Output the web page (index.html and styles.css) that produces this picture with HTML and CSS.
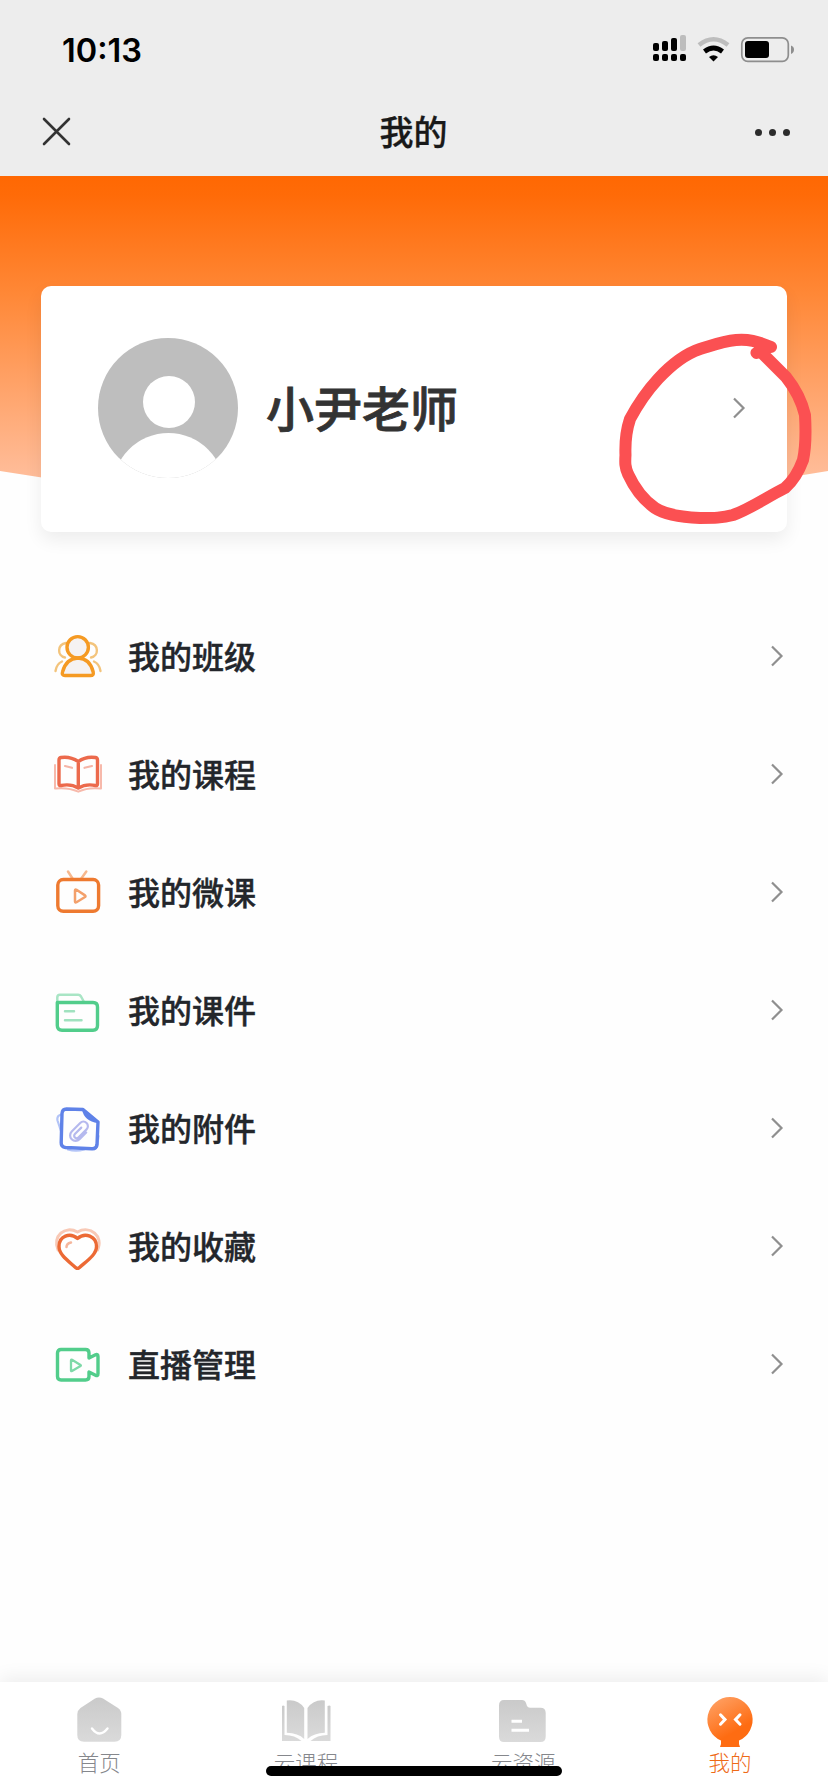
FILE: index.html
```html
<!DOCTYPE html>
<html lang="zh-CN">
<head>
    <meta charset="UTF-8">
    <meta name="viewport" content="width=device-width, initial-scale=1.0">
    <title>我的</title>
    <link rel="stylesheet" href="styles.css">
</head>
<body>

    <header class="top">
        <div class="status-bar">
            <span class="time">10:13</span>
            <svg class="status-icons" width="144" height="30" viewBox="652 34 144 30">
                <g fill="#000">
                    <rect x="653" y="43" width="6" height="8" rx="2"/>
                    <rect x="662" y="41" width="6" height="10" rx="2"/>
                    <rect x="671" y="38" width="6" height="13" rx="2"/>
                    <rect x="680" y="35" width="6" height="16" rx="2" fill="#bdbdbd"/>
                    <rect x="653" y="54" width="6" height="7" rx="2"/>
                    <rect x="662" y="54" width="6" height="7" rx="2"/>
                    <rect x="671" y="54" width="6" height="7" rx="2"/>
                    <rect x="680" y="54" width="6" height="7" rx="2"/>
                </g>
                <path d="M699 45Q713.500 33.500 728 45" fill="none" stroke="#bdbdbd" stroke-width="4.500"/>
                <path d="M704.500 51.500Q713.500 44.500 722.500 51.500" fill="none" stroke="#000" stroke-width="4.800"/>
                <path d="M709 57Q713.500 53.500 718 57L713.500 61.500Z" fill="#000"/>
                <rect x="741.800" y="37.800" width="46.500" height="23.500" rx="6" fill="none" stroke="#8e8e8e" stroke-width="1.700"/>
                <rect x="745" y="41" width="24" height="17" rx="3" fill="#000"/>
                <path d="M791 45.500Q794 46.500 794 49.500T791 54Z" fill="#8e8e8e"/>
            </svg>
        </div>
        <div class="nav-bar">
            <svg class="close" width="30" height="30" viewBox="0 0 30 30">
                <path d="M2 2L27 27M27 2L2 27"/>
            </svg>
            <h1>我的</h1>
            <div class="more"><i></i><i></i><i></i></div>
        </div>
    </header>

    <section class="hero">
        <svg class="hero-bg" width="828" height="330" viewBox="0 0 828 330">
            <defs>
                <linearGradient id="heroFill" x1="0" y1="0" x2="0" y2="1">
                    <stop offset="0" stop-color="#ff6803"/>
                    <stop offset="0.060" stop-color="#ff6b08"/>
                    <stop offset="0.360" stop-color="#ff8837"/>
                    <stop offset="0.900" stop-color="#ffbc98"/>
                    <stop offset="1" stop-color="#ffc6a8"/>
                </linearGradient>
            </defs>
            <path d="M0 0H828V295Q414 365 0 295Z" fill="url(#heroFill)"/>
        </svg>
        <div class="profile-card">
            <svg class="avatar" width="140" height="140" viewBox="0 0 140 140">
                <defs>
                    <clipPath id="round"><circle cx="70" cy="70" r="70"/></clipPath>
                </defs>
                <g clip-path="url(#round)">
                    <rect width="140" height="140" fill="#bebebe"/>
                    <circle cx="71" cy="64" r="26" fill="#fff"/>
                    <circle cx="70.500" cy="151" r="56" fill="#fff"/>
                </g>
            </svg>
            <h2>小尹老师</h2>
            <svg class="arrow" width="14" height="22" viewBox="0 0 14 22">
                <path d="M2 1.500L11.500 11L2 20.500"/>
            </svg>
        </div>
        <!-- hand drawn mark around the arrow -->
        <svg class="mark" width="200" height="200" viewBox="616 330 200 200">
            <path d="M771 347C757 341 748 339 736 340C723 341 713 345 700 349C685 354 671 365 658 379C647 391 638 404 630 419C626 431 625 442 625.500 455C625 463 625 467 628 474C634 487 642 499 655 508C664 514 680 517 700 518C714 518 722 518 733 515C750 509 767 497 785 488C793 481 799 471 803 460C806 446 806 432 805 415C801 398 794 387 786 377C778 369 770 361 761 352L756.500 353L766 348"/>
        </svg>
    </section>

    <main class="menu">
        <a class="menu-item">
            <svg class="icon" viewBox="0 0 48 48" stroke="#f59a23">
                <g stroke="#f3c47c" stroke-width="2.400">
                    <path d="M12 11C3 12.500 3 24 11 25.500M36 11C45 12.500 45 24 37 25.500M1.500 39Q2.500 32 8 29.500M46.500 39Q45.500 32 40 29.500"/>
                </g>
                <circle cx="23.700" cy="15.300" r="10.700" fill="#f5f2f2"/>
                <path d="M11 43.500Q7.500 43.500 8.500 40Q12 26.500 24 26Q36 26.500 39.200 40Q40 43.500 36.500 43.500Z" fill="#f5f2f2"/>
            </svg>
            <span>我的班级</span>
            <svg class="arrow" width="14" height="22" viewBox="0 0 14 22"><path d="M2 1.500L11.500 11L2 20.500"/></svg>
        </a>
        <a class="menu-item">
            <svg class="icon" viewBox="0 0 48 48" stroke="#ec6a4c">
                <path d="M1 15V38.500Q14 37 24.300 41.700Q34 37 47 38.500V15" stroke="#f7b9ab" stroke-width="2"/>
                <path d="M24.300 11.500Q16 6 7 7.500Q5 8 5 10V34Q5 36 7 35.500Q17 33.500 24.300 38Q32 33.500 41.500 35.500Q43.500 36 43.500 34V10Q43.500 8 41.500 7.500Q32 6 24.300 11.500ZM24.300 11.500V38"/>
                <path d="M11 16L18 17.800M38 16L30.500 17.800" stroke="#f5b5a7" stroke-width="2.200"/>
            </svg>
            <span>我的课程</span>
            <svg class="arrow" width="14" height="22" viewBox="0 0 14 22"><path d="M2 1.500L11.500 11L2 20.500"/></svg>
        </a>
        <a class="menu-item">
            <svg class="icon" viewBox="0 0 48 48" stroke="#ee7a30">
                <path d="M14 3.500L18.500 10.500M32.300 3.500L27.300 10.500" stroke="#f7b88d" stroke-width="2.500"/>
                <rect x="3.800" y="11.500" width="40.800" height="31.800" rx="5.500"/>
                <path d="M21 22.500V33.500Q21 35 22.500 34.200L31 29Q32 28.200 31 27.400L22.500 21.800Q21 21 21 22.500Z" stroke="#f3a06b" stroke-width="2.500"/>
            </svg>
            <span>我的微课</span>
            <svg class="arrow" width="14" height="22" viewBox="0 0 14 22"><path d="M2 1.500L11.500 11L2 20.500"/></svg>
        </a>
        <a class="menu-item">
            <svg class="icon" viewBox="0 0 48 48" stroke="#52cd8b">
                <path d="M3.300 17V11.500Q3.300 8.800 6 8.800H24Q26 8.800 27 10.500L29.500 15" stroke="#a9e5c5" stroke-width="2.500"/>
                <path d="M3.300 16.500H39Q43.500 16.500 43.500 21V39.500Q43.500 44.200 39 44.200H8Q3.300 44.200 3.300 39.500Z"/>
                <path d="M11 25.300H20M11 34.200H27.500" stroke="#a0e2bf" stroke-width="2.500"/>
            </svg>
            <span>我的课件</span>
            <svg class="arrow" width="14" height="22" viewBox="0 0 14 22"><path d="M2 1.500L11.500 11L2 20.500"/></svg>
        </a>
        <a class="menu-item">
            <svg class="icon" viewBox="0 0 48 48" stroke="#5f82e8">
                <path d="M7.500 10.500Q2.500 11.500 3.500 16.500L7 27M14 45.500Q22 48 30 45.500M44.500 32L43 43" stroke="#b3c4f7" stroke-width="2.200"/>
                <path d="M12.500 5L29 5.500L44 18L43 40.500Q42.500 45 38 44.800L11.500 43.500Q7 43 7.200 38.500L8 9.500Q8.300 5 12.500 5Z"/>
                <path d="M29 5.500Q31 16 44 18Z" fill="#5f82e8" stroke-width="2"/>
                <path d="M5.500 -4V5.500A5.500 5.500 0 0 1 -5.500 5.500V-6.500A4.500 4.500 0 0 1 3.500 -6.500V5A2.300 2.300 0 0 1 -1.500 5V-4" transform="translate(25.500 27.500) rotate(45)" stroke="#b5b9ee" stroke-width="2.200"/>
            </svg>
            <span>我的附件</span>
            <svg class="arrow" width="14" height="22" viewBox="0 0 14 22"><path d="M2 1.500L11.500 11L2 20.500"/></svg>
        </a>
        <a class="menu-item">
            <svg class="icon" viewBox="0 0 48 48" stroke="#ec6a35">
                <path d="M4 28C-2 14 11 3 23.500 10C36 3 50 14 43.500 28" stroke="#f8c9b6" stroke-width="3"/>
                <path d="M23.500 16.500C16 10 5 14 5 24.500C5 33 15 39.500 21.500 45.500Q23.500 47.300 25.500 45.500C32 39.500 42.500 33 42.500 24.500C42.500 14 31 10 23.500 16.500Z" fill="#fff"/>
                <path d="M12.500 25Q12.500 21.500 17 20.500" stroke="#f5b69c" stroke-width="2.500"/>
            </svg>
            <span>我的收藏</span>
            <svg class="arrow" width="14" height="22" viewBox="0 0 14 22"><path d="M2 1.500L11.500 11L2 20.500"/></svg>
        </a>
        <a class="menu-item">
            <svg class="icon" viewBox="0 0 48 48" stroke="#52cd8b">
                <path d="M7 9.500H31.500Q35 9.500 35 13V18L41.500 14.800Q44 13.800 44 16.500V33.500Q44 36.500 41.500 35.300L35 32V36.500Q35 40 31.500 40H7Q3.500 40 3.500 36.500V13Q3.500 9.500 7 9.500Z"/>
                <path d="M17 20.500V30.500Q17 31.500 18 31L26.500 26Q27.300 25.500 26.500 25L18 19.800Q17 19.300 17 20.500Z" stroke="#7ed9a8" stroke-width="2.300"/>
            </svg>
            <span>直播管理</span>
            <svg class="arrow" width="14" height="22" viewBox="0 0 14 22"><path d="M2 1.500L11.500 11L2 20.500"/></svg>
        </a>
    </main>

    <nav class="tab-bar">
        <svg class="defs" width="0" height="0">
            <defs>
                <linearGradient id="grayFill" x1="0" y1="0" x2="0" y2="1">
                    <stop offset="0" stop-color="#cacaca"/>
                    <stop offset="1" stop-color="#dadada"/>
                </linearGradient>
                <linearGradient id="orangeFill" x1="0" y1="0" x2="0.500" y2="1">
                    <stop offset="0" stop-color="#ffa66c"/>
                    <stop offset="0.800" stop-color="#fe6c12"/>
                </linearGradient>
            </defs>
        </svg>
        <a class="tab">
            <svg width="50" height="50" viewBox="0 0 50 50">
                <path d="M21 3.500Q25 1.500 29 3.500L44 13Q47.300 15.500 47.300 19V40Q47.300 46.700 40.500 46.700H10Q3.300 46.700 3.300 40V19Q3.300 15.500 6.500 13Z" fill="url(#grayFill)"/>
                <path d="M18 33.500Q25.500 43.500 33.500 33.500" fill="none" stroke="#fff" stroke-width="2.400" stroke-linecap="round"/>
            </svg>
            <span>首页</span>
        </a>
        <a class="tab wide">
            <svg width="50" height="50" viewBox="0 0 50 50">
                <g fill="url(#grayFill)">
                    <path d="M5.800 5.500Q17 4 23.200 13V44Q17 38 5.800 37.800Z"/>
                    <path d="M43.800 5.500Q33 4 26.500 13V44Q33 38 43.800 37.800Z"/>
                    <path d="M1 11Q2 10 3.500 11V40Q14 40 20.500 46H1Z"/>
                    <path d="M49.500 11Q48.500 10 46.500 11V40Q36 40 29.500 46H49.500Z"/>
                </g>
            </svg>
            <span>云课程</span>
        </a>
        <a class="tab wide">
            <svg width="50" height="50" viewBox="0 0 50 50">
                <path d="M6 5H24Q27 5 28 8L29 11Q29.800 12.700 32 12.700H42.500Q47.700 12.700 47.700 18V41.500Q47.700 47 42.500 47H6Q1 47 1 41.500V10.500Q1 5 6 5Z" fill="url(#grayFill)"/>
                <path d="M13.500 26.300H24M13.500 35.300H31" stroke="#fff" stroke-width="3"/>
            </svg>
            <span>云资源</span>
        </a>
        <a class="tab active">
            <svg width="50" height="50" viewBox="0 0 50 50">
                <path d="M25 2A22.700 22.700 0 0 1 34 45.500Q33.500 49 35 52H15Q16.500 49 16 45.500A22.700 22.700 0 0 1 25 2Z" fill="url(#orangeFill)"/>
                <path d="M15.500 19.800L20 24.600L15.500 29.200M35 19.800L30.500 24.600L35 29.200" fill="none" stroke="#fff" stroke-width="3" stroke-linecap="round"/>
            </svg>
            <span>我的</span>
        </a>
        <div class="home-indicator"></div>
    </nav>

</body>
</html>
```

FILE: styles.css
```css
* {
    margin: 0;
    padding: 0;
    box-sizing: border-box;
}
body {
    display: flex;
    flex-direction: column;
    width: 828px;
    height: 1792px;
    background: #fefefe;
    font-family: "Noto Sans CJK SC", sans-serif;
    overflow: hidden;
}

/* header */
.top {
    height: 176px;
    background: #ededed;
}
.status-bar {
    display: flex;
    justify-content: space-between;
    align-items: center;
    height: 98px;
    padding: 0 32px 0 62px;
}
.time {
    padding-top: 3px;
    font-family: Inter, sans-serif;
    font-size: 32.5px;
    font-weight: 600;
    line-height: 40px;
    color: #000;
}
.nav-bar {
    display: flex;
    justify-content: space-between;
    align-items: center;
    height: 68px;
    padding: 0 38px 0 42px;
}
.close path {
    fill: none;
    stroke: #333;
    stroke-width: 2.6;
    stroke-linecap: round;
}
.nav-bar h1 {
    padding-bottom: 3px;
    font-size: 34px;
    font-weight: 500;
    line-height: 40px;
    color: #191919;
    -webkit-text-stroke: 0.3px #191919;
}
.more {
    display: flex;
    gap: 7px;
}
.more i {
    width: 7px;
    height: 7px;
    border-radius: 50%;
    background: #2c2c2c;
}

/* profile */
.hero {
    position: relative;
    height: 356px;
    padding: 110px 41px 0;
}
.hero-bg {
    position: absolute;
    top: 0;
    left: 0;
}
.profile-card {
    position: relative;
    display: flex;
    align-items: center;
    height: 246px;
    padding: 0 41px 2px 57px;
    background: #fff;
    border-radius: 10px;
    box-shadow: 0 8px 18px rgba(0, 0, 0, 0.07);
}
.profile-card h2 {
    margin-left: 28px;
    padding-bottom: 4px;
    font-size: 48px;
    font-weight: 500;
    line-height: 60px;
    color: #333;
    -webkit-text-stroke: 0.8px #333;
}
.arrow {
    margin-left: auto;
    fill: none;
    stroke: #8f8f8f;
    stroke-width: 2.2;
}
.mark {
    position: absolute;
    top: 154px;
    left: 616px;
    fill: none;
    stroke: #fb5052;
    stroke-width: 12;
    stroke-linecap: round;
    stroke-linejoin: round;
}

/* menu list */
.menu {
    flex: 1;
    padding: 65px 44px 0 54px;
}
.menu-item {
    display: flex;
    align-items: center;
    height: 118px;
}
.icon {
    width: 48px;
    height: 48px;
    fill: none;
    stroke-width: 3.4;
    stroke-linecap: round;
    stroke-linejoin: round;
}
.menu-item span {
    margin-left: 26px;
    padding-bottom: 3px;
    font-size: 32px;
    font-weight: 500;
    line-height: 40px;
    color: #23262b;
    -webkit-text-stroke: 0.4px #23262b;
}

/* bottom tabs */
.tab-bar {
    position: relative;
    display: flex;
    justify-content: space-around;
    height: 110px;
    padding: 13px 0 0 1px;
    background: #fff;
    box-shadow: 0 -4px 18px rgba(0, 0, 0, 0.07);
}
.defs {
    position: absolute;
}
.tab {
    display: flex;
    flex-direction: column;
    align-items: center;
    gap: 5px;
    width: 43px;
    font-size: 21.5px;
    line-height: 24px;
    font-weight: 300;
    color: #85878c;
    white-space: nowrap;
}
.tab svg {
    flex-shrink: 0;
    overflow: visible;
}
.wide {
    width: 64px;
}
.active {
    color: #ee6a17;
}
.home-indicator {
    position: absolute;
    left: 266px;
    bottom: 16px;
    width: 296px;
    height: 10px;
    border-radius: 5px;
    background: #000;
}
```
